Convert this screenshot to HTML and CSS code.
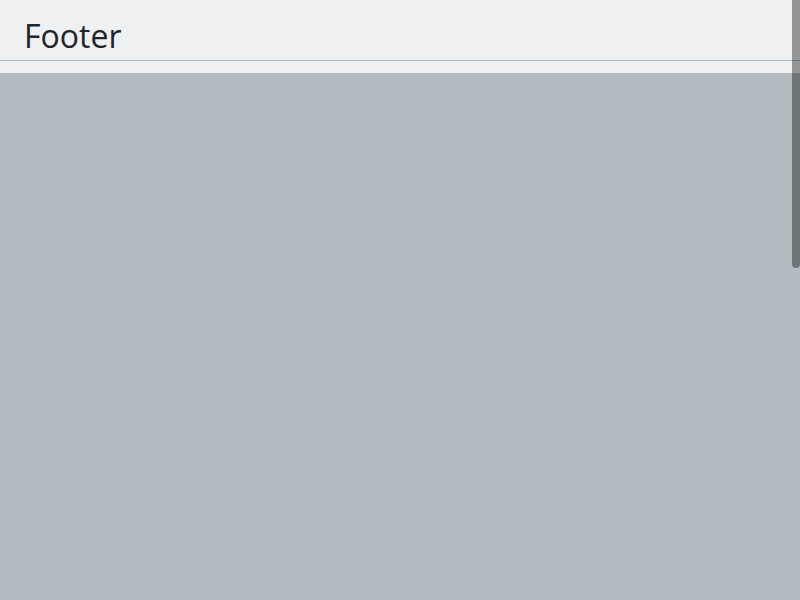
FILE: index.html
```html
<!DOCTYPE html>
<html lang="en">
<head>
<meta charset="utf-8">
<title>Footer</title>
<link rel="stylesheet" href="styles.css">
</head>
<body>
<div class="panel">
  <header class="panel-header">
    <h1 class="title">Footer</h1>
  </header>
  <div class="panel-gap"></div>
</div>
<main class="backdrop"></main>
<div class="scroll-thumb"></div>
</body>
</html>
```

FILE: styles.css
```css
html, body {
  margin: 0;
  padding: 0;
  height: 100%;
  overflow: hidden;
}
body {
  background: #b4bbc1;
  font-family: "Open Sans", "DejaVu Sans", sans-serif;
  position: relative;
}
.panel {
  background: #eff0f2;
}
.panel-header {
  height: 61px;
  border-bottom: 1px solid #aab3b9;
  box-sizing: border-box;
  display: flex;
  align-items: center;
  padding-left: 24px;
}
.title {
  margin: 0;
  font-size: 32px;
  font-weight: 400;
  color: #212529;
  line-height: 1;
  padding-top: 12px;
}
.panel-gap {
  height: 12px;
}
.backdrop {
  display: block;
}
.scroll-thumb {
  position: absolute;
  top: 0;
  right: 0;
  width: 8px;
  height: 268px;
  background: rgba(0, 0, 0, 0.38);
  border-radius: 0 0 4px 4px;
}
```
